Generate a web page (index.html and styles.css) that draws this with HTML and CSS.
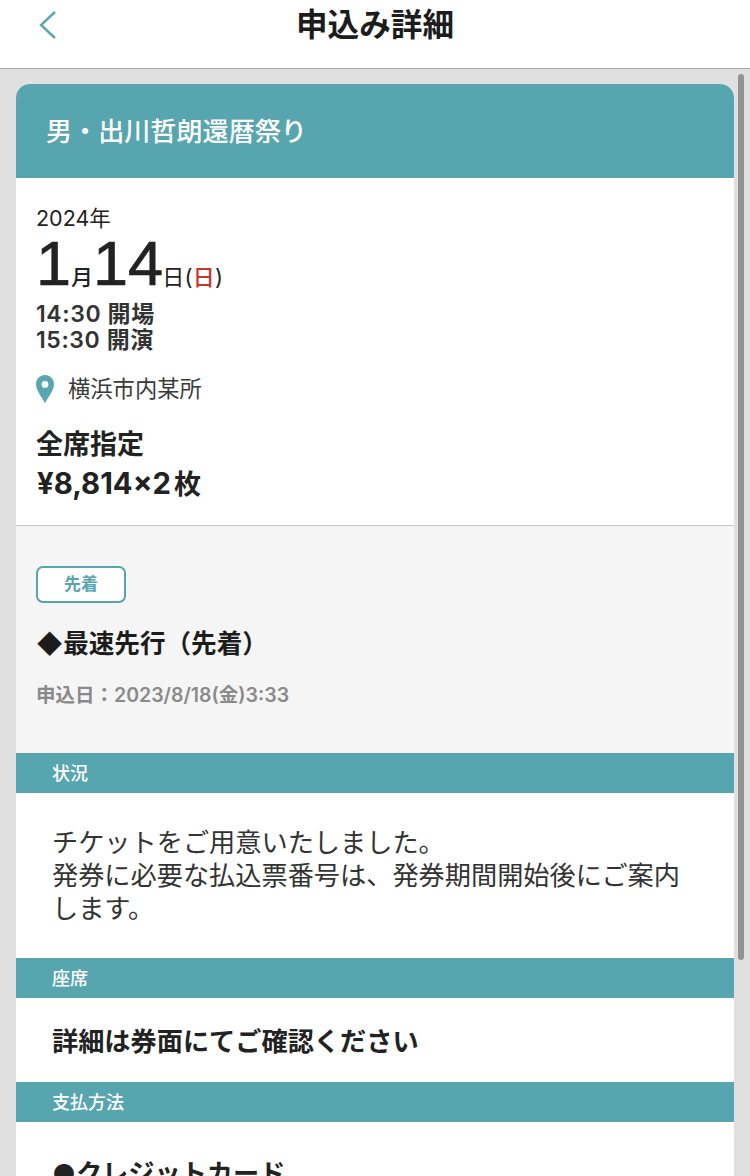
FILE: index.html
```html
<!DOCTYPE html>
<html lang="ja">
<head>
<meta charset="utf-8">
<title>申込み詳細</title>
<link rel="stylesheet" href="styles.css">
</head>
<body>
<header class="topbar">
  <svg class="back" width="20" height="30" viewBox="0 0 20 30"><path d="M17 2 L3 15 L17 28" fill="none" stroke="#5aa6b0" stroke-width="2.4"/></svg>
  <h1 class="page-title">申込み詳細</h1>
</header>
<main class="card">
  <h2 class="event">男・出川哲朗還暦祭り</h2>
  <section class="info">
    <div class="year">2024年</div>
    <div class="date"><span class="big">1</span><span class="unit">月</span><span class="big">14</span><span class="unit unit-day">日(<span class="sun">日</span>)</span></div>
    <div class="times">14:30 開場<br>15:30 開演</div>
    <div class="place">
      <svg width="18" height="28" viewBox="0 0 18 28"><path fill-rule="evenodd" fill="#5aa6b0" d="M9 0C4 0 0 4 0 9.300C0 15 5.500 22 9 28C12.500 22 18 15 18 9.300C18 4 14 0 9 0ZM9 6a3.400 3.400 0 1 1 0 6.800a3.400 3.400 0 1 1 0-6.800Z"/></svg>
      <span>横浜市内某所</span>
    </div>
    <div class="seat">全席指定</div>
    <div class="price">¥8,814×2<span class="mai">枚</span></div>
  </section>
  <section class="apply">
    <span class="badge">先着</span>
    <div class="round">◆最速先行（先着）</div>
    <div class="applied">申込日：2023/8/18(金)3:33</div>
  </section>
  <div class="band">状況</div>
  <p class="body-text status">チケットをご用意いたしました。<br>発券に必要な払込票番号は、発券期間開始後にご案内します。</p>
  <div class="band">座席</div>
  <p class="body-text strong seats">詳細は券面にてご確認ください</p>
  <div class="band">支払方法</div>
  <p class="body-text strong pay">●クレジットカード</p>
</main>
<div class="scrollbar"></div>
</body>
</html>
```
FILE: styles.css
```css
* { box-sizing: border-box; }
html, body { margin: 0; height: 1176px; overflow: hidden; }
body {
  position: relative;
  background: #e0e0e0;
  color: #222;
  font-family: "Inter", "Noto Sans CJK JP", sans-serif;
}
.topbar {
  position: relative;
  height: 69px;
  background: #fff;
  border-bottom: 1px solid #a8a8a8;
  padding-top: 3px;
  text-align: center;
}
.back { position: absolute; left: 38px; top: 10px; }
.page-title { margin: 0; font-size: 31.600px; line-height: 44px; font-weight: 700; color: #1c1c1c; }
.card {
  margin: 15px 16px 0;
  background: #fff;
  border-radius: 14px 14px 0 0;
  overflow: hidden;
}
.event {
  margin: 0;
  height: 94px;
  padding: 0 30px;
  background: #57a5af;
  color: #fff;
  font-size: 26.100px;
  line-height: 96px;
  font-weight: 500;
}
.info { padding: 25px 20px 20px; border-bottom: 1px solid #c4c4c4; }
.year { font-size: 21.500px; line-height: 30px; }
.date { display: flex; align-items: baseline; height: 58px; line-height: 60px; color: #222; }
.big { font-family: "Liberation Sans", sans-serif; font-size: 63px; -webkit-text-stroke: .7px #222; }
.unit { font-size: 22px; font-weight: 500; }
.unit-day { margin-left: -1px; letter-spacing: .3px; font-weight: 400; }
.sun { color: #c8332c; font-weight: 500; }
.times { margin-top: 10px; font-size: 23px; line-height: 26px; font-weight: 600; letter-spacing: .6px; color: #333; }
.place { display: flex; align-items: center; gap: 14px; margin-top: 21px; font-size: 22.300px; line-height: 30px; color: #3a3a3a; }
.seat { margin-top: 22px; font-size: 27px; line-height: 38px; font-weight: 700; }
.price { font-size: 29.300px; line-height: 40px; font-weight: 700; padding-left: 1px; }
.mai { margin-left: 3px; font-size: 27px; }
.apply { height: 227px; padding: 40px 20px 0; background: #f5f5f5; }
.badge {
  display: block;
  width: 90px;
  height: 37px;
  border: 2px solid #57a5af;
  border-radius: 7px;
  background: #fff;
  color: #57a5af;
  font-size: 17px;
  line-height: 33px;
  text-align: center;
  font-weight: 700;
}
.round { margin-top: 21px; font-size: 25.600px; line-height: 40px; font-weight: 700; color: #1c1c1c; }
.applied { margin-top: 16px; font-size: 19.500px; line-height: 30px; font-weight: 600; color: #8a8a8a; }
.band {
  height: 40px;
  padding-left: 36px;
  background: #57a5af;
  color: #fff;
  font-size: 18px;
  line-height: 41px;
  font-weight: 500;
}
.body-text { margin: 0; padding: 0 36px; font-size: 26.200px; line-height: 33px; color: #333; }
.strong { font-weight: 700; color: #222; }
.status { height: 165px; padding-top: 33px; }
.seats { height: 84px; padding-top: 27px; }
.pay { padding-top: 35px; }
.scrollbar {
  position: absolute;
  left: 738px;
  top: 74px;
  width: 6px;
  height: 886px;
  border-radius: 3px;
  background: #939393;
}
```
